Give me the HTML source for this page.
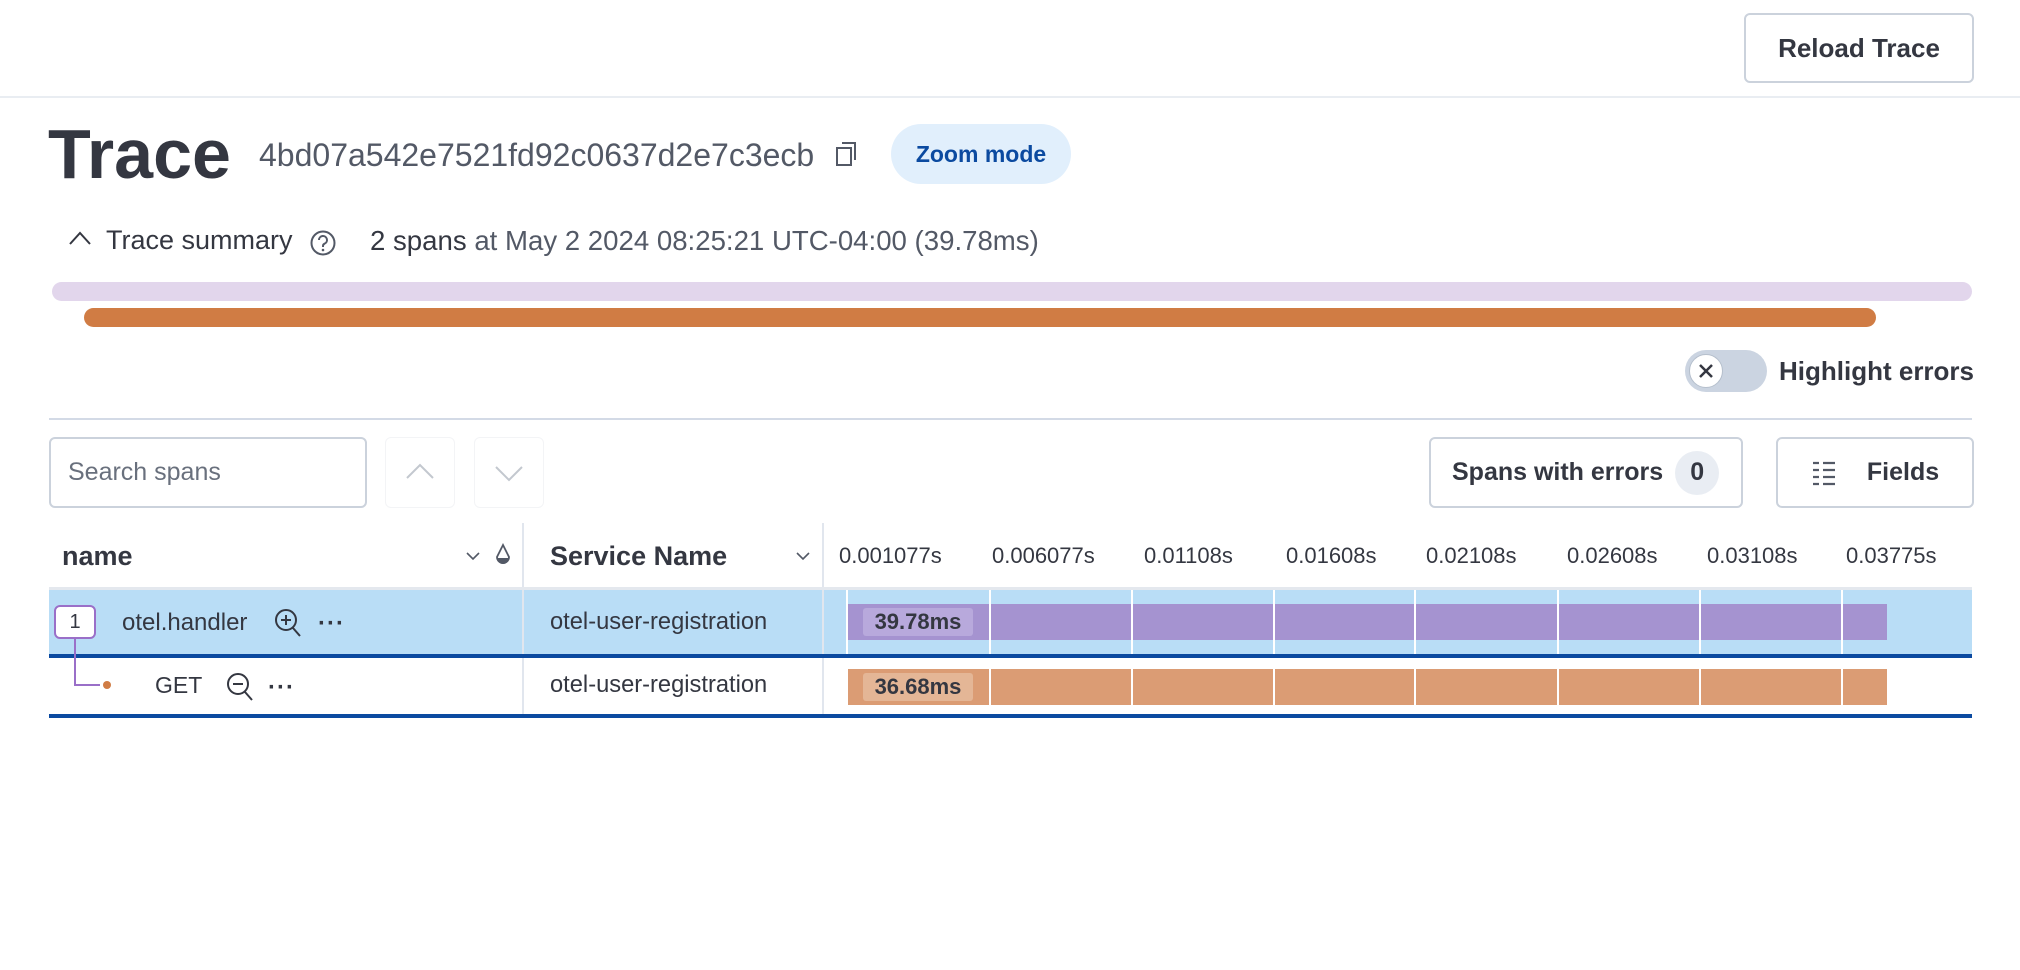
<!DOCTYPE html>
<html><head><meta charset="utf-8"><style>
*{box-sizing:border-box;margin:0;padding:0}
body{width:2020px;height:970px;background:#fff;font-family:"Liberation Sans",sans-serif;color:#343741;position:relative;overflow:hidden}
.a{position:absolute;white-space:nowrap}
.btn{position:absolute;border:2px solid #cbd2dc;border-radius:6px;background:#fff;display:flex;align-items:center;justify-content:center;font-size:25px;color:#343741}
.tick{position:absolute;top:543px;font-size:22px;color:#343741}
.g{position:absolute;width:2px;background:#fff}
</style></head><body>
<div class="a" style="left:0;top:96px;width:2020px;height:2px;background:#e9edf2"></div>
<div class="btn" style="left:1744px;top:13px;width:230px;height:70px;font-weight:bold;font-size:26px">Reload Trace</div>

<div class="a" style="left:48px;top:114px;font-size:70px;font-weight:900;color:#343741">Trace</div>
<div class="a" style="left:259px;top:137px;font-size:32px;color:#535966">4bd07a542e7521fd92c0637d2e7c3ecb</div>
<svg class="a" style="left:835px;top:141px" width="24" height="26" viewBox="0 0 24 26"><rect x="2" y="7" width="14" height="17" fill="none" stroke="#535966" stroke-width="2"/><path d="M7 2h13v17" fill="none" stroke="#535966" stroke-width="2"/></svg>
<div class="a" style="left:891px;top:124px;width:180px;height:60px;border-radius:30px;background:#e1effc;color:#0b4aa0;font-size:23px;font-weight:bold;display:flex;align-items:center;justify-content:center">Zoom mode</div>

<svg class="a" style="left:68px;top:230px" width="24" height="16" viewBox="0 0 24 16"><path d="M2 14L12 3l10 11" fill="none" stroke="#343741" stroke-width="2"/></svg>
<div class="a" style="left:106px;top:225px;font-size:27px;color:#343741">Trace summary</div>
<svg class="a" style="left:309px;top:229px" width="28" height="28" viewBox="0 0 28 28"><circle cx="14" cy="14" r="11.5" fill="none" stroke="#535966" stroke-width="2"/><path d="M10 11a4 4 0 1 1 5.5 3.7c-1 .5-1.5 1.2-1.5 2.3v1" fill="none" stroke="#535966" stroke-width="2"/><circle cx="14" cy="21" r="1.3" fill="#535966"/></svg>
<div class="a" style="left:370px;top:225px;font-size:27.6px;color:#535966"><span style="color:#343741">2 spans</span> at May 2 2024 08:25:21 UTC-04:00 (39.78ms)</div>

<div class="a" style="left:52px;top:282px;width:1920px;height:19px;border-radius:10px;background:#e2d6ec"></div>
<div class="a" style="left:84px;top:308px;width:1792px;height:19px;border-radius:10px;background:#d07c44"></div>

<div class="a" style="left:1685px;top:350px;width:82px;height:42px;border-radius:21px;background:#cbd4e1"></div>
<div class="a" style="left:1689px;top:354px;width:34px;height:34px;border-radius:17px;background:#fff;border:1px solid #b5bfcc"></div>
<svg class="a" style="left:1696px;top:361px" width="20" height="20" viewBox="0 0 20 20"><path d="M4 4l12 12M16 4L4 16" stroke="#343741" stroke-width="2.5"/></svg>
<div class="a" style="left:1779px;top:356px;font-size:26px;font-weight:bold;color:#343741">Highlight errors</div>

<div class="a" style="left:49px;top:418px;width:1923px;height:2px;background:#d3dae6"></div>

<div class="a" style="left:49px;top:437px;width:318px;height:71px;border:2px solid #cbd2dc;border-radius:6px;padding-left:17px;line-height:67px;font-size:25px;color:#69707d">Search spans</div>
<div class="a" style="left:385px;top:437px;width:70px;height:71px;border:1px solid #f3f4f6;border-radius:6px"></div>
<div class="a" style="left:474px;top:437px;width:70px;height:71px;border:1px solid #f3f4f6;border-radius:6px"></div>
<svg class="a" style="left:405px;top:462px" width="30" height="18" viewBox="0 0 30 18"><path d="M2 16L15 3l13 13" fill="none" stroke="#c3c8cf" stroke-width="2"/></svg>
<svg class="a" style="left:494px;top:465px" width="30" height="18" viewBox="0 0 30 18"><path d="M2 2l13 13 13-13" fill="none" stroke="#c3c8cf" stroke-width="2"/></svg>

<div class="btn" style="left:1429px;top:437px;width:314px;height:71px;font-weight:bold;justify-content:flex-start;padding-left:21px">Spans with errors<span style="margin-left:12px;width:44px;height:44px;border-radius:22px;background:#e9edf3;display:inline-flex;align-items:center;justify-content:center">0</span></div>
<div class="btn" style="left:1776px;top:437px;width:198px;height:71px;font-weight:bold">
<svg width="26" height="30" viewBox="0 0 26 30" style="margin-right:30px"><path d="M2 5h6M12 5h12M2 12h6M12 12h12M2 19h6M12 19h12M2 26h6M12 26h12" stroke="#535966" stroke-width="2.2"/></svg>Fields</div>

<!-- header -->
<div class="a" style="left:62px;top:541px;font-size:27px;font-weight:bold">name</div>
<svg class="a" style="left:465px;top:550px" width="16" height="12" viewBox="0 0 16 12"><path d="M2 3l6 6 6-6" fill="none" stroke="#535966" stroke-width="1.6"/></svg>
<svg class="a" style="left:494px;top:543px" width="18" height="26" viewBox="0 0 18 26"><path d="M9 2L3 14a6 6 0 0 0 12 0z" fill="none" stroke="#535966" stroke-width="1.8"/><path d="M3 15h12a6 6 0 0 1-12 0z" fill="#535966"/></svg>
<div class="a" style="left:522px;top:523px;width:2px;height:191px;background:#e1e6ee"></div>
<div class="a" style="left:550px;top:541px;font-size:27px;font-weight:bold">Service Name</div>
<svg class="a" style="left:795px;top:550px" width="16" height="12" viewBox="0 0 16 12"><path d="M2 3l6 6 6-6" fill="none" stroke="#535966" stroke-width="1.6"/></svg>
<div class="a" style="left:822px;top:523px;width:2px;height:191px;background:#e1e6ee"></div>
<div class="tick" style="left:839px">0.001077s</div>
<div class="tick" style="left:992px">0.006077s</div>
<div class="tick" style="left:1144px">0.01108s</div>
<div class="tick" style="left:1286px">0.01608s</div>
<div class="tick" style="left:1426px">0.02108s</div>
<div class="tick" style="left:1567px">0.02608s</div>
<div class="tick" style="left:1707px">0.03108s</div>
<div class="tick" style="left:1846px">0.03775s</div>
<div class="a" style="left:49px;top:587px;width:1923px;height:3px;background:#e4e8ee"></div>

<!-- row1 -->
<div class="a" style="left:49px;top:590px;width:1923px;height:64px;background:#b9ddf6"></div>
<div class="a" style="left:522px;top:590px;width:2px;height:124px;background:#e1e6ee"></div>
<div class="a" style="left:822px;top:590px;width:2px;height:124px;background:#e1e6ee"></div>
<div class="a" style="left:49px;top:654px;width:1923px;height:4px;background:#0b4aa0"></div>
<div class="a" style="left:49px;top:714px;width:1923px;height:4px;background:#0b4aa0"></div>

<div class="a" style="left:74px;top:639px;width:2px;height:46px;background:#9a6fc8"></div>
<div class="a" style="left:74px;top:684px;width:26px;height:2px;background:#9a6fc8"></div>
<div class="a" style="left:103px;top:681px;width:8px;height:8px;border-radius:4px;background:#d07c44"></div>
<div class="a" style="left:54px;top:605px;width:42px;height:34px;border:2px solid #9a6fc8;border-radius:6px;background:#fff;font-size:20px;text-align:center;line-height:30px">1</div>
<div class="a" style="left:122px;top:609px;font-size:24px">otel.handler</div>
<svg class="a" style="left:273px;top:607px" width="30" height="32" viewBox="0 0 30 32"><circle cx="13" cy="13" r="10" fill="none" stroke="#343741" stroke-width="2"/><path d="M20 21l7 8M13 8v10M8 13h10" stroke="#343741" stroke-width="2"/></svg>
<div class="a" style="left:318px;top:610px;font-size:24px;font-weight:bold;letter-spacing:1px">···</div>
<div class="a" style="left:550px;top:609px;font-size:23.7px">otel-user-registration</div>

<div class="a" style="left:155px;top:672px;font-size:23px">GET</div>
<svg class="a" style="left:225px;top:671px" width="30" height="32" viewBox="0 0 30 32"><circle cx="13" cy="13" r="10" fill="none" stroke="#343741" stroke-width="2"/><path d="M20 21l7 8M8 13h10" stroke="#343741" stroke-width="2"/></svg>
<div class="a" style="left:268px;top:674px;font-size:24px;font-weight:bold;letter-spacing:1px">···</div>
<div class="a" style="left:550px;top:672px;font-size:23.7px">otel-user-registration</div>

<!-- bars -->
<div class="a" style="left:848px;top:604px;width:1039px;height:36px;background:#a593d0"></div>
<div class="a" style="left:863px;top:608px;width:110px;height:28px;background:#b8a9dc;border-radius:3px;font-size:22px;font-weight:bold;text-align:center;line-height:28px">39.78ms</div>
<div class="a" style="left:848px;top:669px;width:1039px;height:36px;background:#db9c74"></div>
<div class="a" style="left:863px;top:673px;width:110px;height:28px;background:#e4b696;border-radius:3px;font-size:22px;font-weight:bold;text-align:center;line-height:28px">36.68ms</div>
<div class="g" style="left:846px;top:590px;height:64px"></div>
<div class="g" style="left:989px;top:590px;height:64px"></div><div class="g" style="left:989px;top:658px;height:56px"></div>
<div class="g" style="left:1131px;top:590px;height:64px"></div><div class="g" style="left:1131px;top:658px;height:56px"></div>
<div class="g" style="left:1273px;top:590px;height:64px"></div><div class="g" style="left:1273px;top:658px;height:56px"></div>
<div class="g" style="left:1414px;top:590px;height:64px"></div><div class="g" style="left:1414px;top:658px;height:56px"></div>
<div class="g" style="left:1557px;top:590px;height:64px"></div><div class="g" style="left:1557px;top:658px;height:56px"></div>
<div class="g" style="left:1699px;top:590px;height:64px"></div><div class="g" style="left:1699px;top:658px;height:56px"></div>
<div class="g" style="left:1841px;top:590px;height:64px"></div><div class="g" style="left:1841px;top:658px;height:56px"></div>
</body></html>
